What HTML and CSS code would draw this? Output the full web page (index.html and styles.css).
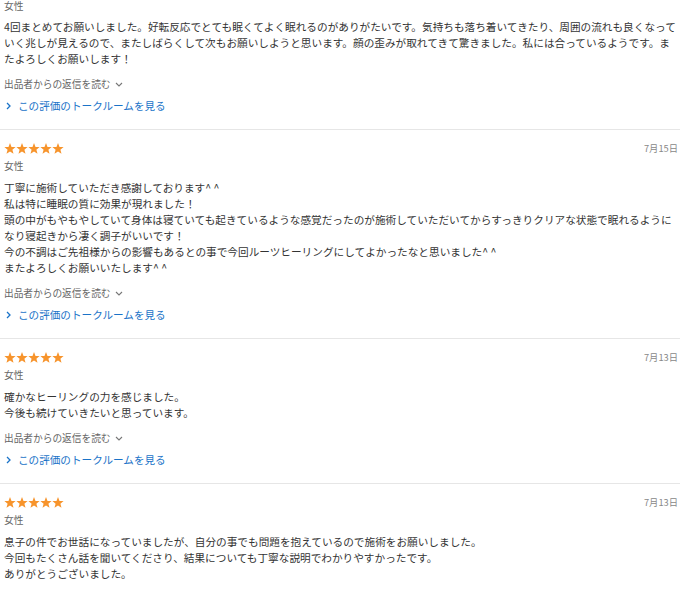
FILE: index.html
```html
<!DOCTYPE html>
<html lang="ja">
<head>
<meta charset="utf-8">
<link rel="stylesheet" href="styles.css">
</head>
<body>
<div class="list">
  <section class="review first">
    <div class="gender">女性</div>
    <p class="text">4回まとめてお願いしました。好転反応でとても眠くてよく眠れるのがありがたいです。気持ちも落ち着いてきたり、周囲の流れも良くなっていく兆しが見えるので、またしばらくして次もお願いしようと思います。顔の歪みが取れてきて驚きました。私には合っているようです。またよろしくお願いします！</p>
    <div class="reply">出品者からの返信を読む<svg class="down" width="8" height="5" viewBox="0 0 8 5"><path d="M1 1 L4 4 L7 1" fill="none" stroke="#777" stroke-width="1.1"/></svg></div>
    <a class="link" href="#"><svg class="right" width="5" height="8" viewBox="0 0 5 8"><path d="M1 1 L4 4 L1 7" fill="none" stroke="#1a73c8" stroke-width="1.3"/></svg>この評価のトークルームを見る</a>
  </section>

  <section class="review">
    <div class="head">
      <svg class="stars" width="60" height="11" viewBox="0 0 60 11">
        <g fill="#f7942c">
          <polygon points="6,0 7.5,3.9 11.6,4.1 8.4,6.7 9.5,10.7 6,8.4 2.5,10.7 3.6,6.7 0.4,4.1 4.5,3.9"/>
          <polygon transform="translate(12 0)" points="6,0 7.5,3.9 11.6,4.1 8.4,6.7 9.5,10.7 6,8.4 2.5,10.7 3.6,6.7 0.4,4.1 4.5,3.9"/>
          <polygon transform="translate(24 0)" points="6,0 7.5,3.9 11.6,4.1 8.4,6.7 9.5,10.7 6,8.4 2.5,10.7 3.6,6.7 0.4,4.1 4.5,3.9"/>
          <polygon transform="translate(36 0)" points="6,0 7.5,3.9 11.6,4.1 8.4,6.7 9.5,10.7 6,8.4 2.5,10.7 3.6,6.7 0.4,4.1 4.5,3.9"/>
          <polygon transform="translate(48 0)" points="6,0 7.5,3.9 11.6,4.1 8.4,6.7 9.5,10.7 6,8.4 2.5,10.7 3.6,6.7 0.4,4.1 4.5,3.9"/>
        </g>
      </svg>
      <span class="date">7月15日</span>
    </div>
    <div class="gender">女性</div>
    <p class="text">丁寧に施術していただき感謝しております^ ^<br>私は特に睡眠の質に効果が現れました！<br>頭の中がもやもやしていて身体は寝ていても起きているような感覚だったのが施術していただいてからすっきりクリアな状態で眠れるようになり寝起きから凄く調子がいいです！<br>今の不調はご先祖様からの影響もあるとの事で今回ルーツヒーリングにしてよかったなと思いました^ ^<br>またよろしくお願いいたします^ ^</p>
    <div class="reply">出品者からの返信を読む<svg class="down" width="8" height="5" viewBox="0 0 8 5"><path d="M1 1 L4 4 L7 1" fill="none" stroke="#777" stroke-width="1.1"/></svg></div>
    <a class="link" href="#"><svg class="right" width="5" height="8" viewBox="0 0 5 8"><path d="M1 1 L4 4 L1 7" fill="none" stroke="#1a73c8" stroke-width="1.3"/></svg>この評価のトークルームを見る</a>
  </section>

  <section class="review">
    <div class="head">
      <svg class="stars" width="60" height="11" viewBox="0 0 60 11">
        <g fill="#f7942c">
          <polygon points="6,0 7.5,3.9 11.6,4.1 8.4,6.7 9.5,10.7 6,8.4 2.5,10.7 3.6,6.7 0.4,4.1 4.5,3.9"/>
          <polygon transform="translate(12 0)" points="6,0 7.5,3.9 11.6,4.1 8.4,6.7 9.5,10.7 6,8.4 2.5,10.7 3.6,6.7 0.4,4.1 4.5,3.9"/>
          <polygon transform="translate(24 0)" points="6,0 7.5,3.9 11.6,4.1 8.4,6.7 9.5,10.7 6,8.4 2.5,10.7 3.6,6.7 0.4,4.1 4.5,3.9"/>
          <polygon transform="translate(36 0)" points="6,0 7.5,3.9 11.6,4.1 8.4,6.7 9.5,10.7 6,8.4 2.5,10.7 3.6,6.7 0.4,4.1 4.5,3.9"/>
          <polygon transform="translate(48 0)" points="6,0 7.5,3.9 11.6,4.1 8.4,6.7 9.5,10.7 6,8.4 2.5,10.7 3.6,6.7 0.4,4.1 4.5,3.9"/>
        </g>
      </svg>
      <span class="date">7月13日</span>
    </div>
    <div class="gender">女性</div>
    <p class="text">確かなヒーリングの力を感じました。<br>今後も続けていきたいと思っています。</p>
    <div class="reply">出品者からの返信を読む<svg class="down" width="8" height="5" viewBox="0 0 8 5"><path d="M1 1 L4 4 L7 1" fill="none" stroke="#777" stroke-width="1.1"/></svg></div>
    <a class="link" href="#"><svg class="right" width="5" height="8" viewBox="0 0 5 8"><path d="M1 1 L4 4 L1 7" fill="none" stroke="#1a73c8" stroke-width="1.3"/></svg>この評価のトークルームを見る</a>
  </section>

  <section class="review">
    <div class="head">
      <svg class="stars" width="60" height="11" viewBox="0 0 60 11">
        <g fill="#f7942c">
          <polygon points="6,0 7.5,3.9 11.6,4.1 8.4,6.7 9.5,10.7 6,8.4 2.5,10.7 3.6,6.7 0.4,4.1 4.5,3.9"/>
          <polygon transform="translate(12 0)" points="6,0 7.5,3.9 11.6,4.1 8.4,6.7 9.5,10.7 6,8.4 2.5,10.7 3.6,6.7 0.4,4.1 4.5,3.9"/>
          <polygon transform="translate(24 0)" points="6,0 7.5,3.9 11.6,4.1 8.4,6.7 9.5,10.7 6,8.4 2.5,10.7 3.6,6.7 0.4,4.1 4.5,3.9"/>
          <polygon transform="translate(36 0)" points="6,0 7.5,3.9 11.6,4.1 8.4,6.7 9.5,10.7 6,8.4 2.5,10.7 3.6,6.7 0.4,4.1 4.5,3.9"/>
          <polygon transform="translate(48 0)" points="6,0 7.5,3.9 11.6,4.1 8.4,6.7 9.5,10.7 6,8.4 2.5,10.7 3.6,6.7 0.4,4.1 4.5,3.9"/>
        </g>
      </svg>
      <span class="date">7月13日</span>
    </div>
    <div class="gender">女性</div>
    <p class="text">息子の件でお世話になっていましたが、自分の事でも問題を抱えているので施術をお願いしました。<br>今回もたくさん話を聞いてくださり、結果についても丁寧な説明でわかりやすかったです。<br>ありがとうございました。</p>
  </section>
</div>
</body>
</html>
```

FILE: styles.css
```css
html, body {
  margin: 0;
  padding: 0;
  background: #ffffff;
}

body {
  font-family: "Noto Sans CJK JP", "Noto Sans", sans-serif;
  color: #333333;
  width: 680px;
  overflow: hidden;
}

.list {
  display: flex;
  flex-direction: column;
}

.review {
  display: flex;
  flex-direction: column;
  align-items: flex-start;
  padding: 10px 2px 15px 4px;
  border-top: 1px solid #e6e6e6;
}

.review.first {
  padding-top: 0;
  border-top: none;
}

.head {
  align-self: stretch;
  display: flex;
  justify-content: space-between;
  align-items: center;
  height: 16px;
  margin-bottom: 3px;
}

.stars {
  display: block;
  margin-top: 1px;
}

.date {
  font-size: 9.3px;
  color: #888888;
  line-height: 16px;
}

.gender {
  font-size: 9.8px;
  line-height: 14px;
  color: #666666;
}

.first .gender {
  line-height: 12px;
}

.text {
  margin: 7px 0 0;
  font-size: 10.65px;
  line-height: 16px;
  color: #333333;
}

.reply {
  margin-top: 9px;
  font-size: 9.7px;
  line-height: 16px;
  color: #666666;
  display: flex;
  align-items: center;
  gap: 4px;
}

.down {
  display: block;
  margin-top: 1px;
}

.link {
  margin-top: 6px;
  font-size: 10.6px;
  line-height: 16px;
  color: #1a73c8;
  text-decoration: none;
  display: flex;
  align-items: center;
  gap: 7px;
  padding-left: 2px;
}

.right {
  display: block;
}
```
